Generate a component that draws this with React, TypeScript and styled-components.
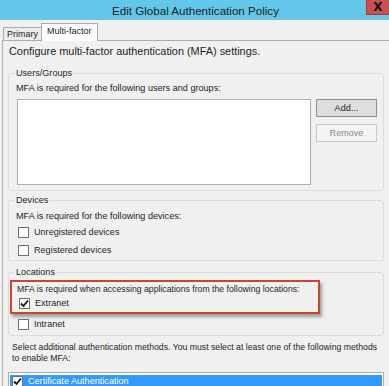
import { FC } from 'react';
import styled, { createGlobalStyle } from 'styled-components';

const GlobalStyle = createGlobalStyle`
  html, body {
    margin: 0;
    padding: 0;
    background: #f0f0f0;
  }
  body {
    font-family: 'Liberation Sans', Arial, sans-serif;
    color: #1e1e1e;
  }
`;

const Window = styled.div`
  width: 389px;
  height: 386px;
  overflow: hidden;
  background: #f0f0f0;
  display: flex;
  flex-direction: column;
`;

const TitleBar = styled.div`
  height: 20px;
  flex: none;
  background: #63c7ea;
  display: grid;
  grid-template-columns: 1fr auto 1fr;
  align-items: center;
`;

const Title = styled.div`
  grid-column: 2;
  font-size: 11.6px;
  color: #1b1b1b;
  padding-left: 2px;
`;

const CloseButton = styled.div`
  grid-column: 3;
  justify-self: end;
  align-self: start;
  width: 22px;
  height: 14px;
  background: #c75050;
  border-left: 1px solid #a33a3a;
  border-bottom: 1px solid #a33a3a;
  display: flex;
  align-items: center;
  justify-content: center;
  font-family: 'DejaVu Sans', sans-serif;
  font-weight: bold;
  font-size: 12px;
  line-height: 1;
  color: #111;
`;

const TabStrip = styled.div`
  height: 20px;
  flex: none;
  display: flex;
  align-items: flex-end;
  padding-left: 3px;
  position: relative;
  z-index: 1;
`;

const Tab = styled.div<{ $active?: boolean }>`
  height: ${(p) => (p.$active ? '18px' : '13px')};
  margin-bottom: ${(p) => (p.$active ? '-1px' : '0')};
  padding: 0 ${(p) => (p.$active ? '5px' : '3px')};
  background: ${(p) => (p.$active ? '#fdfdfd' : '#ececec')};
  border: 1px solid #acacac;
  border-bottom: none;
  ${(p) => (p.$active ? '' : 'border-right: none;')}
  font-size: 9px;
  line-height: ${(p) => (p.$active ? '15px' : '13px')};
  box-sizing: border-box;
  color: #1e1e1e;
`;

const Panel = styled.div`
  flex: 1;
  min-height: 0;
  margin-left: 2px;
  border-top: 1px solid #adadad;
  border-left: 1px solid #adadad;
  background: #f0f0f0;
  display: flex;
  flex-direction: column;
`;

const Intro = styled.div`
  margin-top: 4px;
  padding-left: 6px;
  font-size: 10.9px;
  line-height: 12px;
`;

const Group = styled.fieldset<{ $top: number; $bottom: number }>`
  margin: ${(p) => p.$top}px 5px 0 5px;
  padding: 0 6px ${(p) => p.$bottom}px 6px;
  border: 1px solid #dcdcdc;
  border-radius: 3px;
  min-width: 0;
`;

const Legend = styled.legend`
  padding: 0 1px;
  font-size: 9.1px;
  line-height: 12px;
`;

const Label = styled.div<{ $gap?: number; $size?: number }>`
  margin-top: ${(p) => p.$gap ?? 3}px;
  padding-left: 1px;
  font-size: ${(p) => p.$size ?? 9.1}px;
  line-height: 12px;
  white-space: nowrap;
`;

const UsersRow = styled.div`
  display: flex;
  margin-top: 5px;
  gap: 5px;
`;

const ListBox = styled.div`
  margin-left: 2px;
  width: 294px;
  height: 86px;
  background: #fff;
  border: 1px solid #abadb3;
  box-sizing: border-box;
`;

const ButtonColumn = styled.div`
  display: flex;
  flex-direction: column;
  gap: 7px;
`;

const Button = styled.div<{ $disabled?: boolean }>`
  width: 61px;
  height: 18px;
  box-sizing: border-box;
  border: 1px solid ${(p) => (p.$disabled ? '#c8c8c8' : '#8f8f8f')};
  background: ${(p) => (p.$disabled ? '#f4f4f4' : '#dedede')};
  color: ${(p) => (p.$disabled ? '#8a8a8a' : '#1e1e1e')};
  font-size: 9.1px;
  display: flex;
  align-items: center;
  justify-content: center;
`;

const CheckRow = styled.div<{ $gap: number }>`
  display: flex;
  align-items: center;
  gap: 5px;
  margin-top: ${(p) => p.$gap}px;
  margin-left: 3px;
  height: 12px;
  font-size: 9.1px;
`;

const Box = styled.div`
  width: 11px;
  height: 11px;
  flex: none;
  box-sizing: border-box;
  border: 1px solid #707070;
  background: #fff;
  display: flex;
  align-items: center;
  justify-content: center;
`;

const Highlight = styled.div`
  margin: 2px 0 0 -5px;
  width: 310px;
  padding: 0 0 3px 4px;
  border: 2px solid #c8472c;
  box-shadow: 2px 3px 3px rgba(0, 0, 0, 0.35);
  box-sizing: border-box;
`;

const Note = styled.div`
  margin-top: 6px;
  padding-left: 9px;
  padding-right: 4px;
  font-size: 8.7px;
  line-height: 11px;
`;

const MethodList = styled.div`
  margin: 8px 5px 0 5px;
  border: 1px solid #abadb3;
  border-bottom: none;
  background: #fff;
  padding: 1px 1px 0 1px;
  flex: 1;
`;

const MethodRow = styled.div`
  height: 12px;
  margin-top: 1px;
  background: #3399ff;
  color: #fff;
  display: flex;
  align-items: center;
  gap: 5px;
  padding-left: 2px;
  font-size: 9.1px;
`;

const Check: FC<{ checked?: boolean }> = ({ checked }) => (
  <Box>
    {checked && (
      <svg width="9" height="9" viewBox="0 0 9 9">
        <path d="M1 4.5 L3.5 7 L8 1.5" fill="none" stroke="#111" strokeWidth="1.8" />
      </svg>
    )}
  </Box>
);

const CheckItem: FC<{ label: string; checked?: boolean; gap: number }> = ({ label, checked, gap }) => (
  <CheckRow $gap={gap}>
    <Check checked={checked} />
    <span>{label}</span>
  </CheckRow>
);

export default function App() {
  return (
    <>
      <GlobalStyle />
      <Window>
        <TitleBar>
          <Title>Edit Global Authentication Policy</Title>
          <CloseButton>X</CloseButton>
        </TitleBar>
        <TabStrip>
          <Tab>Primary</Tab>
          <Tab $active>Multi-factor</Tab>
        </TabStrip>
        <Panel>
          <Intro>Configure multi-factor authentication (MFA) settings.</Intro>

          <Group $top={10} $bottom={5}>
            <Legend>Users/Groups</Legend>
            <Label>MFA is required for the following users and groups:</Label>
            <UsersRow>
              <ListBox />
              <ButtonColumn>
                <Button>Add...</Button>
                <Button $disabled>Remove</Button>
              </ButtonColumn>
            </UsersRow>
          </Group>

          <Group $top={3} $bottom={4}>
            <Legend>Devices</Legend>
            <Label $gap={4}>MFA is required for the following devices:</Label>
            <CheckItem label="Unregistered devices" gap={4} />
            <CheckItem label="Registered devices" gap={6} />
          </Group>

          <Group $top={5} $bottom={5}>
            <Legend>Locations</Legend>
            <Highlight>
              <Label $gap={1} $size={8.7}>
                MFA is required when accessing applications from the following locations:
              </Label>
              <CheckItem label="Extranet" checked gap={2} />
            </Highlight>
            <CheckItem label="Intranet" gap={4} />
          </Group>

          <Note>
            Select additional authentication methods. You must select at least one of the following methods to
            enable MFA:
          </Note>
          <MethodList>
            <MethodRow>
              <Check checked />
              <span>Certificate Authentication</span>
            </MethodRow>
          </MethodList>
        </Panel>
      </Window>
    </>
  );
}
